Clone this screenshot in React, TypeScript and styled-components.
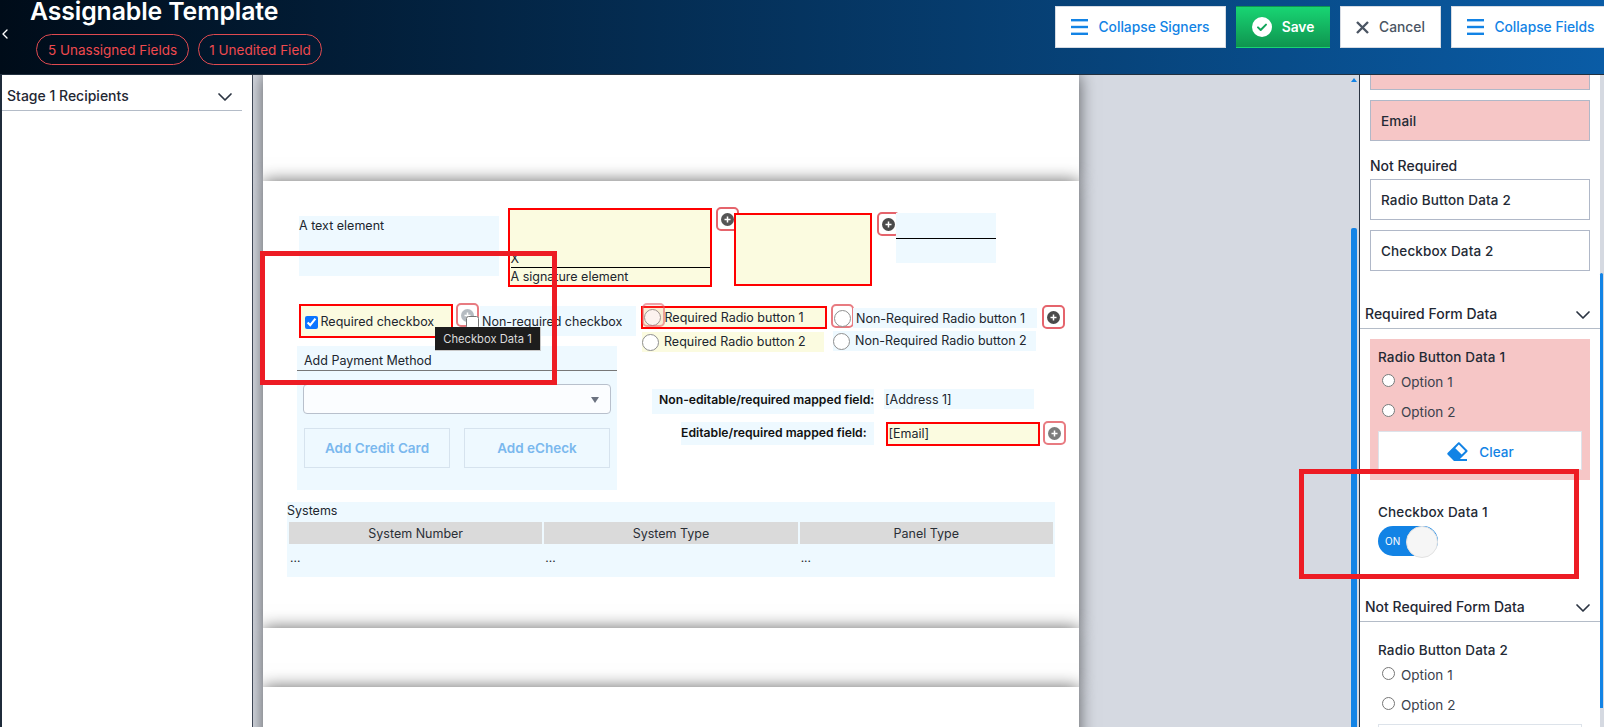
/**
 * Assignable template editor: header actions, recipients list, document
 * pages with placed form fields, and the form data side panel.
 */

import React from 'react';
import styled, { createGlobalStyle } from 'styled-components';
import { ChevronDown, ChevronLeft } from 'lucide-react';
import { RiEraserFill } from 'react-icons/ri';

const GlobalStyle = createGlobalStyle`
  html, body {
    margin: 0;
    padding: 0;
    height: 100%;
    overflow: hidden;
    background: #fff;
    font-family: Inter, "Noto Sans", sans-serif;
    color: #1f2733;
  }
  * { box-sizing: border-box; }
`;

const Shell = styled.div`
  position: relative;
  display: flex;
  flex-direction: column;
  width: 1604px;
  height: 727px;
  overflow: hidden;
`;

/* ── Header ──────────────────────────────────────────────────────── */

const Header = styled.header`
  flex: 0 0 75px;
  display: flex;
  justify-content: space-between;
  align-items: flex-start;
  background: linear-gradient(90deg, #000c19 0%, #0a5ca6 100%);
  border-bottom: 1px solid #22303f;
  overflow: hidden;
`;

const TitleBlock = styled.div`
  display: flex;
  align-items: center;
  color: #fff;
`;

const BackIcon = styled(ChevronLeft)`
  flex: none;
  margin: 2px 0 0 -3px;
  color: #fff;
`;

const TitleText = styled.div`
  margin-left: 17px;
`;

const Title = styled.h1`
  margin: 0;
  font-size: 24.8px;
  line-height: 22px;
  font-weight: 600;
  letter-spacing: -0.1px;
`;

const Pills = styled.div`
  display: flex;
  gap: 9px;
  margin: 12px 0 0 6px;
`;

const Pill = styled.span<{ $w: number }>`
  display: flex;
  align-items: center;
  justify-content: center;
  width: ${(p) => p.$w}px;
  height: 31px;
  border: 1.5px solid #df4a50;
  border-radius: 16px;
  color: #ef4a4f;
  font-size: 13.5px;
  white-space: nowrap;
`;

const Actions = styled.div`
  display: flex;
  gap: 10px;
  margin-top: 6px;
  margin-right: -7px;
`;

const ActionButton = styled.button<{ $w: number; $tone?: 'blue' | 'green' | 'grey' }>`
  display: flex;
  align-items: center;
  justify-content: center;
  gap: 10px;
  width: ${(p) => p.$w}px;
  height: 42px;
  padding: 0;
  font-family: inherit;
  font-size: 13.8px;
  font-weight: ${(p) => (p.$tone === 'green' ? 600 : 500)};
  border: 1px solid ${(p) => (p.$tone === 'green' ? 'transparent' : '#d6dbe3')};
  background: ${(p) => (p.$tone === 'green' ? 'linear-gradient(180deg, #18d573 0%, #0f944f 100%)' : '#fff')};
  color: ${(p) => (p.$tone === 'green' ? '#fff' : p.$tone === 'grey' ? '#4b5563' : '#1283e5')};
`;

const MenuIcon = () => (
  <svg width="17" height="16" viewBox="0 0 17 16">
    <rect y="0" width="17" height="2.4" fill="#1283e5" />
    <rect y="6.8" width="17" height="2.4" fill="#1283e5" />
    <rect y="13.6" width="17" height="2.4" fill="#1283e5" />
  </svg>
);

const SaveIcon = () => (
  <svg width="20" height="20" viewBox="0 0 20 20">
    <circle cx="10" cy="10" r="10" fill="#fff" />
    <path d="M6 10.4l2.7 2.6L14 7.6" fill="none" stroke="#11a55a" strokeWidth="2" strokeLinecap="round" strokeLinejoin="round" />
  </svg>
);

const CloseIcon = () => (
  <svg width="13" height="13" viewBox="0 0 13 13">
    <path d="M1 1l11 11M12 1L1 12" stroke="#4b5563" strokeWidth="2.4" />
  </svg>
);

/* ── Body columns ────────────────────────────────────────────────── */

const Body = styled.div`
  flex: 1;
  display: flex;
  min-height: 0;
`;

const LeftPanel = styled.aside`
  flex: 0 0 253px;
  background: #fff;
  border-left: 2px solid #1f2b3a;
  border-right: 1.5px solid #3d4654;
  padding-right: 10px;
`;

const SectionHead = styled.div<{ $h: number }>`
  display: flex;
  align-items: flex-end;
  justify-content: space-between;
  height: ${(p) => p.$h}px;
  padding: 0 5px 4px 5px;
  border-bottom: 1px solid #b4bcc8;
  font-size: 14px;
  line-height: 20px;
  font-weight: 500;
  color: #1f2733;
`;

const HeadChevron = styled(ChevronDown).attrs({ size: 24, strokeWidth: 1.7, color: '#2b3442' })`
  margin-bottom: -3px;
`;

const Viewer = styled.main`
  flex: 1;
  min-width: 0;
  background: #d5d9e1;
  overflow: hidden;
  padding-left: 10px;
`;

const Page = styled.div<{ $h: number }>`
  position: relative;
  width: 816px;
  height: ${(p) => p.$h}px;
  background: #fff;
  box-shadow: 0 0 16px rgba(0, 0, 0, 0.6);
`;

const ScrollTrack = styled.div<{ $w: number }>`
  position: relative;
  flex: 0 0 ${(p) => p.$w}px;
  background: #d5d9e1;
`;

const ScrollThumb = styled.div<{ $top: number; $h: number; $w: number; $left?: number }>`
  position: absolute;
  top: ${(p) => p.$top}px;
  left: ${(p) => p.$left ?? 0}px;
  width: ${(p) => p.$w}px;
  height: ${(p) => p.$h}px;
  background: #1283e5;
  border-radius: 2px 2px 0 0;
`;

const ScrollArrow = styled.div`
  position: absolute;
  top: 3px;
  left: 1px;
  width: 0;
  height: 0;
  border-left: 3px solid transparent;
  border-right: 3px solid transparent;
  border-bottom: 4px solid #1283e5;
`;

/* ── Placed form fields on the document ──────────────────────────── */

const Placed = styled.div<{
  $x: number;
  $y: number;
  $w: number;
  $h: number;
  $kind?: 'blue' | 'yellow' | 'required';
  $pad?: string;
  $gap?: number;
  $row?: boolean;
}>`
  position: absolute;
  left: ${(p) => p.$x}px;
  top: ${(p) => p.$y}px;
  width: ${(p) => p.$w}px;
  height: ${(p) => p.$h}px;
  padding: ${(p) => p.$pad ?? '0'};
  display: ${(p) => (p.$row ? 'flex' : 'block')};
  align-items: center;
  gap: ${(p) => p.$gap ?? 0}px;
  background: ${(p) => (p.$kind === 'blue' ? '#eef9ff' : p.$kind ? '#fbfbe0' : 'transparent')};
  border: ${(p) => (p.$kind === 'required' ? '2.5px solid #ff0000' : 'none')};
`;

const SignatureBox = styled(Placed)`
  display: flex;
  flex-direction: column;
  align-items: stretch;
  justify-content: flex-end;
`;

const FieldLabel = styled.div<{ $bold?: boolean }>`
  font-size: ${(p) => (p.$bold ? 12.2 : 12.5)}px;
  line-height: 16px;
  font-weight: ${(p) => (p.$bold ? 600 : 400)};
  color: ${(p) => (p.$bold ? '#111' : '#20262e')};
  white-space: nowrap;
`;

const SignatureLine = styled.div`
  height: 1px;
  margin-bottom: 1px;
  background: #000;
`;

const BlankLine = styled.div`
  height: 1px;
  background: #000;
`;

const AddBadge = styled.div<{ $x: number; $y: number; $faded?: boolean; $ghost?: boolean }>`
  position: absolute;
  left: ${(p) => p.$x}px;
  top: ${(p) => p.$y}px;
  width: 23px;
  height: 24px;
  display: flex;
  align-items: center;
  justify-content: center;
  border: 2px solid #e5646c;
  border-radius: 5px;
  background: ${(p) => (p.$ghost ? 'rgba(240, 170, 150, 0.25)' : '#fff')};
  opacity: ${(p) => (p.$ghost ? 0.6 : p.$faded ? 0.85 : 1)};
`;

const PlusDot = ({ color = '#4a4a4a' }: { color?: string }) => (
  <svg width="13" height="13" viewBox="0 0 13 13">
    <circle cx="6.5" cy="6.5" r="6.5" fill={color} />
    <path d="M6.5 3.5v6M3.5 6.5h6" stroke="#fff" strokeWidth="1.5" />
  </svg>
);

const Check = styled.input`
  flex: none;
  width: 13px;
  height: 13px;
  margin: 0;
  accent-color: #0a75ff;
`;

const HangingCheck = styled(Check)`
  position: absolute;
  left: -14px;
  top: 10px;
`;

const RadioDot = styled.input`
  flex: none;
  appearance: none;
  width: 17px;
  height: 17px;
  margin: 0;
  background: #fff;
  border: 1.5px solid #8f8f8f;
  border-radius: 50%;
`;

const HangingRadio = styled(RadioDot)`
  position: absolute;
  left: -19px;
  top: 2px;
`;

const PaymentTitle = styled.div`
  height: 25px;
  padding: 7px 0 0 7px;
  border-bottom: 1px solid #777;
  font-size: 12.5px;
  line-height: 16px;
  color: #20262e;
`;

const PaymentSelect = styled.div`
  position: relative;
  width: 308px;
  height: 30px;
  margin: 13px 0 0 6px;
  border: 1px solid #b8c0cc;
  border-radius: 4px;
  background: #fbfdff;
  &::after {
    content: '';
    position: absolute;
    right: 11px;
    top: 12px;
    border-left: 4px solid transparent;
    border-right: 4px solid transparent;
    border-top: 6px solid #6b7280;
  }
`;

const PaymentActions = styled.div`
  display: flex;
  gap: 14px;
  margin: 14px 0 0 7px;
`;

const PaymentButton = styled.div`
  width: 146px;
  height: 40px;
  display: flex;
  align-items: center;
  justify-content: center;
  border: 1px solid #d6e3ee;
  color: #7ab8ee;
  font-size: 13.5px;
  font-weight: 600;
`;

const SystemsGrid = styled.div`
  width: 764px;
  margin: 3px 0 0 2px;
  display: grid;
  grid-template-columns: repeat(3, 1fr);
  column-gap: 2px;
`;

const SystemsHead = styled.div`
  height: 22px;
  display: flex;
  align-items: center;
  justify-content: center;
  background: #dadada;
  font-size: 12.5px;
  color: #2a2f36;
`;

const SystemsCell = styled.div`
  padding: 6px 1px 0;
  font-size: 12px;
  line-height: 16px;
  color: #20262e;
`;

const Tooltip = styled.div`
  position: absolute;
  left: 172px;
  top: 146px;
  width: 106px;
  height: 24px;
  display: flex;
  align-items: center;
  justify-content: center;
  background: #1d1d1d;
  border: 1px solid #c9c9c9;
  border-top: none;
  border-left: none;
  color: #dcdcdc;
  font-size: 11.2px;
`;

/* ── Right panel ─────────────────────────────────────────────────── */

const RightPanel = styled.aside`
  flex: 0 0 241px;
  background: #fff;
  border-left: 1px solid #2b3442;
  overflow: hidden;
`;

const DataCard = styled.div<{ $pink?: boolean }>`
  height: 41px;
  margin: 0 10px 10px;
  padding-left: 10px;
  display: flex;
  align-items: center;
  border: 1px solid #b0b8c8;
  background: ${(p) => (p.$pink ? '#f6c6c6' : '#fff')};
  font-size: 13.5px;
  font-weight: 500;
  letter-spacing: 0.15px;
  color: #232a35;
`;

const ClippedCard = styled(DataCard)`
  height: 15px;
  margin-bottom: 10px;
  border-top: none;
`;

const GroupTitle = styled.div`
  margin: 16px 10px 4px;
  height: 18px;
  font-size: 14px;
  line-height: 18px;
  font-weight: 500;
  color: #1f2733;
`;

const FormBlock = styled.div<{ $pink?: boolean; $h: number; $top: number }>`
  height: ${(p) => p.$h}px;
  margin: ${(p) => p.$top}px 10px 0;
  padding: 9px 8px 0;
  background: ${(p) => (p.$pink ? '#f6c6c6' : 'transparent')};
`;

const BlockLabel = styled.div`
  margin-bottom: 1px;
  font-size: 13.5px;
  line-height: 18px;
  font-weight: 500;
  letter-spacing: 0.15px;
  color: #232a35;
`;

const OptionRow = styled.label`
  display: flex;
  align-items: center;
  gap: 6px;
  height: 30px;
  padding-left: 4px;
  font-size: 13.5px;
  color: #3a414c;
  input {
    width: 13px;
    height: 13px;
    margin: 0 0 3px;
  }
`;

const ClearButton = styled.div`
  display: flex;
  align-items: center;
  justify-content: center;
  gap: 9px;
  width: 204px;
  height: 39px;
  margin-top: 4px;
  padding-top: 2px;
  background: #fff;
  border: 1px solid #dde3ea;
  color: #1283e5;
  font-size: 13.5px;
  font-weight: 500;
`;

const Toggle = styled.div`
  position: relative;
  width: 60px;
  height: 30px;
  margin-top: 5px;
  border-radius: 15px;
  background: #1283e5;
  color: #fff;
  font-size: 10px;
  line-height: 30px;
  padding-left: 7px;
  &::after {
    content: '';
    position: absolute;
    right: 0;
    top: 0;
    width: 30px;
    height: 30px;
    border-radius: 50%;
    background: #f6f6f6;
    border: 1px solid #e2e2e2;
  }
`;

/* ── Screenshot annotations ──────────────────────────────────────── */

const Callout = styled.div<{ $x: number; $y: number; $w: number; $h: number }>`
  position: absolute;
  left: ${(p) => p.$x}px;
  top: ${(p) => p.$y}px;
  width: ${(p) => p.$w}px;
  height: ${(p) => p.$h}px;
  border: 5px solid #ed1c24;
  pointer-events: none;
`;

const noop = () => undefined;

const App: React.FC = () => (
  <Shell>
    <GlobalStyle />
    <Header>
      <TitleBlock>
        <BackIcon size={16} strokeWidth={2} />
        <TitleText>
          <Title>Assignable Template</Title>
          <Pills>
            <Pill $w={153}>5 Unassigned Fields</Pill>
            <Pill $w={124}>1 Unedited Field</Pill>
          </Pills>
        </TitleText>
      </TitleBlock>
      <Actions>
        <ActionButton $w={171}><MenuIcon />Collapse Signers</ActionButton>
        <ActionButton $w={94} $tone="green"><SaveIcon />Save</ActionButton>
        <ActionButton $w={101} $tone="grey"><CloseIcon />Cancel</ActionButton>
        <ActionButton $w={160}><MenuIcon />Collapse Fields</ActionButton>
      </Actions>
    </Header>

    <Body>
      <LeftPanel>
        <SectionHead $h={36}>
          Stage 1 Recipients
          <HeadChevron />
        </SectionHead>
      </LeftPanel>

      <Viewer>
        <Page $h={106} />
        <Page $h={447}>
          <Placed $x={36} $y={35} $w={200} $h={60} $kind="blue" $pad="2px 0 0">
            <FieldLabel>A text element</FieldLabel>
          </Placed>

          <SignatureBox $x={245} $y={27} $w={204} $h={79} $kind="required" $pad="0 0 0 0.5px">
            <FieldLabel>X</FieldLabel>
            <SignatureLine />
            <FieldLabel>A signature element</FieldLabel>
          </SignatureBox>

          <AddBadge $x={453} $y={26}><PlusDot color="#555" /></AddBadge>
          <Placed $x={471} $y={32} $w={138} $h={73} $kind="required" />
          <AddBadge $x={614} $y={31}><PlusDot /></AddBadge>
          <Placed $x={633} $y={32} $w={100} $h={50} $kind="blue" $pad="25px 0 0">
            <BlankLine />
          </Placed>

          <Placed $x={36} $y={123} $w={154} $h={34} $kind="required" $row $gap={3} $pad="2px 0 0 3.5px">
            <Check type="checkbox" checked onChange={noop} />
            <FieldLabel>Required checkbox</FieldLabel>
          </Placed>
          <AddBadge $x={193} $y={122} $faded><PlusDot color="#a9b0b7" /></AddBadge>
          <Placed $x={217} $y={125} $w={156} $h={30} $kind="blue" $row $pad="2px 0 0 2px">
            <HangingCheck type="checkbox" onChange={noop} />
            <FieldLabel>Non-required checkbox</FieldLabel>
          </Placed>

          <Placed $x={378} $y={125} $w={186} $h={23} $kind="required" $row $gap={4} $pad="0 0 0 0.5px">
            <RadioDot type="radio" onChange={noop} />
            <FieldLabel>Required Radio button 1</FieldLabel>
          </Placed>
          <AddBadge $x={379} $y={122} $ghost />
          <Placed $x={379} $y={151} $w={182} $h={20} $kind="yellow" $row $gap={5}>
            <RadioDot type="radio" onChange={noop} />
            <FieldLabel>Required Radio button 2</FieldLabel>
          </Placed>

          <AddBadge $x={568} $y={123} $faded />
          <Placed $x={590} $y={127} $w={184} $h={20} $kind="blue" $row $pad="1px 0 0 3px">
            <HangingRadio type="radio" onChange={noop} />
            <FieldLabel>Non-Required Radio button 1</FieldLabel>
          </Placed>
          <Placed $x={570} $y={150} $w={203} $h={20} $kind="blue" $row $gap={5}>
            <RadioDot type="radio" onChange={noop} />
            <FieldLabel>Non-Required Radio button 2</FieldLabel>
          </Placed>
          <AddBadge $x={779} $y={124}><PlusDot /></AddBadge>

          <Placed $x={34} $y={165} $w={320} $h={144} $kind="blue">
            <PaymentTitle>Add Payment Method</PaymentTitle>
            <PaymentSelect />
            <PaymentActions>
              <PaymentButton>Add Credit Card</PaymentButton>
              <PaymentButton>Add eCheck</PaymentButton>
            </PaymentActions>
          </Placed>

          <Placed $x={389} $y={208} $w={222} $h={25} $kind="blue" $pad="3px 0 0 7px">
            <FieldLabel $bold>Non-editable/required mapped field:</FieldLabel>
          </Placed>
          <Placed $x={621} $y={208} $w={150} $h={20} $kind="blue" $pad="3px 0 0 1px">
            <FieldLabel>[Address 1]</FieldLabel>
          </Placed>

          <Placed $x={418} $y={241} $w={193} $h={23} $kind="blue" $pad="3px 0 0">
            <FieldLabel $bold>Editable/required mapped field:</FieldLabel>
          </Placed>
          <Placed $x={623} $y={241} $w={154} $h={24} $kind="required" $pad="1.5px 0 0 0.5px">
            <FieldLabel>[Email]</FieldLabel>
          </Placed>
          <AddBadge $x={780} $y={240} $faded><PlusDot color="#666" /></AddBadge>

          <Placed $x={24} $y={321} $w={768} $h={75} $kind="blue" $pad="1px 0 0">
            <FieldLabel>Systems</FieldLabel>
            <SystemsGrid>
              <SystemsHead>System Number</SystemsHead>
              <SystemsHead>System Type</SystemsHead>
              <SystemsHead>Panel Type</SystemsHead>
              <SystemsCell>...</SystemsCell>
              <SystemsCell>...</SystemsCell>
              <SystemsCell>...</SystemsCell>
            </SystemsGrid>
          </Placed>

          <Tooltip>Checkbox Data 1</Tooltip>
        </Page>
        <Page $h={59} />
        <Page $h={60} />
      </Viewer>

      <ScrollTrack $w={9}>
        <ScrollArrow />
        <ScrollThumb $top={153} $h={500} $w={6} $left={1} />
      </ScrollTrack>

      <RightPanel>
        <ClippedCard $pink />
        <DataCard $pink>Email</DataCard>
        <GroupTitle>Not Required</GroupTitle>
        <DataCard>Radio Button Data 2</DataCard>
        <DataCard>Checkbox Data 2</DataCard>
        <SectionHead $h={48}>
          Required Form Data
          <HeadChevron />
        </SectionHead>
        <FormBlock $pink $h={141} $top={10}>
          <BlockLabel>Radio Button Data 1</BlockLabel>
          <OptionRow><input type="radio" onChange={noop} />Option 1</OptionRow>
          <OptionRow><input type="radio" onChange={noop} />Option 2</OptionRow>
          <ClearButton><RiEraserFill size={24} />Clear</ClearButton>
        </FormBlock>
        <FormBlock $h={84} $top={14}>
          <BlockLabel>Checkbox Data 1</BlockLabel>
          <Toggle>ON</Toggle>
        </FormBlock>
        <SectionHead $h={44}>
          Not Required Form Data
          <HeadChevron />
        </SectionHead>
        <FormBlock $h={120} $top={10}>
          <BlockLabel>Radio Button Data 2</BlockLabel>
          <OptionRow><input type="radio" onChange={noop} />Option 1</OptionRow>
          <OptionRow><input type="radio" onChange={noop} />Option 2</OptionRow>
          <ClearButton />
        </FormBlock>
      </RightPanel>

      <ScrollTrack $w={4}>
        <ScrollThumb $top={198} $h={435} $w={3} />
      </ScrollTrack>
    </Body>

    <Callout $x={260} $y={251} $w={297} $h={134} />
    <Callout $x={1299} $y={469} $w={280} $h={110} />
  </Shell>
);

export default App;
